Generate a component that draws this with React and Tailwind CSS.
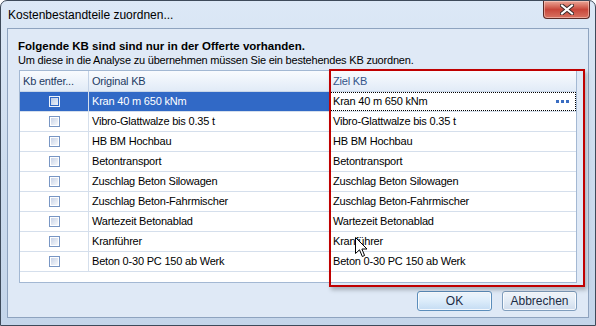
import React from "react";

const rows = [
  "Kran 40 m 650 kNm",
  "Vibro-Glattwalze bis 0.35 t",
  "HB BM Hochbau",
  "Betontransport",
  "Zuschlag Beton Silowagen",
  "Zuschlag Beton-Fahrmischer",
  "Wartezeit Betonablad",
  "Kranführer",
  "Beton 0-30 PC 150 ab Werk",
];

function CheckBox({ selected }) {
  return (
    <span
      className={`flex h-[11px] w-[11px] items-center justify-center border ${
        selected ? "border-[#eef3fa]" : "border-[#7896c4]"
      }`}
    >
      <span
        className={`block h-[7px] w-[7px] ${
          selected
            ? "bg-gradient-to-br from-[#b9c9e3] to-[#eef3fa]"
            : "bg-gradient-to-br from-[#c8d3e6] to-[#f6f8fb]"
        }`}
      />
    </span>
  );
}

function Cursor() {
  return (
    <svg width="13" height="21" viewBox="0 0 13 21" className="absolute left-[354px] top-[236px]">
      <path
        d="M0.5 0.5 L0.5 16.5 L4.5 12.8 L7.3 19.5 L9.6 18.5 L6.9 12 L12 12 Z"
        fill="#ffffff"
        stroke="#000000"
        strokeWidth="1"
        strokeLinejoin="miter"
      />
    </svg>
  );
}

export default function App() {
  return (
    <div className="relative flex h-[326px] w-[596px] flex-col overflow-hidden rounded-t-[7px] border border-[#3e4a5a] bg-gradient-to-b from-[#dce8f6] via-[#cddcee] to-[#c4d5ea] font-['Liberation_Sans',Arial,sans-serif] text-[11px] text-black">
      {/* title bar */}
      <div className="flex h-[27px] shrink-0 items-start justify-between">
        <span className="pl-[7px] pt-[7px] text-[12px] leading-[14px] text-black">
          Kostenbestandteile zuordnen...
        </span>
        <button className="mr-[5px] flex h-[18px] w-[47px] items-center justify-center rounded-b-[4px] border border-t-0 border-[#5a2a26] bg-gradient-to-b from-[#eaa597] via-[#c8463a] to-[#d87262] shadow-[inset_0_0_0_1px_rgba(255,220,210,0.5)]">
          <svg width="14" height="11" viewBox="0 0 14 11">
            <path
              d="M2 1.5 L12 9.5 M12 1.5 L2 9.5"
              stroke="#3a2a2a"
              strokeWidth="4"
              strokeLinecap="square"
            />
            <path
              d="M2 1.5 L12 9.5 M12 1.5 L2 9.5"
              stroke="#ffffff"
              strokeWidth="2"
              strokeLinecap="square"
            />
          </svg>
        </button>
      </div>

      {/* client area */}
      <div className="mx-[6px] mb-[7px] flex flex-1 flex-col border border-[#8ea3bf] bg-[#dfe9f6] pl-[10px] pr-[10px] pt-[10px]">
        <div className="text-[11.5px] font-bold leading-[14px]">
          Folgende KB sind sind nur in der Offerte vorhanden.
        </div>
        <div className="text-[11px] leading-[14px] tracking-[-0.2px]">
          Um diese in die Analyse zu übernehmen müssen Sie ein bestehendes KB zuordnen.
        </div>

        {/* grid */}
        <div className="ml-[1px] mt-[3px] flex h-[213px] w-[558px] flex-col border border-[#a3b8d3] bg-white tracking-[-0.2px]">
          <div className="grid h-[21px] shrink-0 grid-cols-[69px_241px_246px] border-b border-[#c8d6e8] bg-gradient-to-b from-[#f9fbfe] to-[#e1ebf7] text-[#1e3b63]">
            <div className="flex items-center truncate border-r border-[#c3d2e6] pl-[3px]">Kb entfer...</div>
            <div className="flex items-center border-r border-[#c3d2e6] pl-[3px]">Original KB</div>
            <div className="flex items-center pl-[3px] text-[#34558a]">Ziel KB</div>
          </div>
          {rows.map((name, i) => {
            const selected = i === 0;
            return (
              <div
                key={name}
                className="grid h-[20px] shrink-0 grid-cols-[69px_241px_246px] border-b border-[#d5dfec]"
              >
                <div
                  className={`flex items-center justify-center border-r ${
                    selected ? "border-[#d5dfec] bg-[#3169c6]" : "border-[#d5dfec]"
                  }`}
                >
                  <CheckBox selected={selected} />
                </div>
                <div
                  className={`flex items-center border-r border-[#d5dfec] pl-[3px] ${
                    selected ? "bg-[#3169c6] text-white" : ""
                  }`}
                >
                  {name}
                </div>
                {selected ? (
                  <div className="flex items-center justify-between border border-dotted border-black pl-[2px] pr-[6px]">
                    <span>{name}</span>
                    <span className="flex gap-[2px]">
                      <span className="h-[3px] w-[3px] bg-[#3a6dc2]" />
                      <span className="h-[3px] w-[3px] bg-[#3a6dc2]" />
                      <span className="h-[3px] w-[3px] bg-[#3a6dc2]" />
                    </span>
                  </div>
                ) : (
                  <div className="flex items-center pl-[3px]">{name}</div>
                )}
              </div>
            );
          })}
        </div>

        {/* buttons */}
        <div className="mr-[1px] mt-[8px] flex justify-end gap-[10px]">
          <button className="h-[20px] w-[75px] rounded-[3px] border border-[#5b8dbb] bg-gradient-to-b from-[#eef6fd] via-[#dcecfa] to-[#c4dcf3] text-[12px] leading-[18px] text-[#1c2c44] shadow-[inset_0_0_0_1px_rgba(255,255,255,0.8)]">
            OK
          </button>
          <button className="h-[20px] w-[75px] rounded-[3px] border border-[#7f9dbd] bg-gradient-to-b from-[#f2f6fb] via-[#e2ebf5] to-[#cfdcec] text-[12px] leading-[18px] text-[#1c2c44] shadow-[inset_0_0_0_1px_rgba(255,255,255,0.8)]">
            Abbrechen
          </button>
        </div>
      </div>

      {/* red highlight */}
      <div className="pointer-events-none absolute left-[328px] top-[68px] h-[218px] w-[256px] border-2 border-[#c00000] shadow-[2px_3px_4px_rgba(0,0,0,0.25)]" />

      <Cursor />
    </div>
  );
}
